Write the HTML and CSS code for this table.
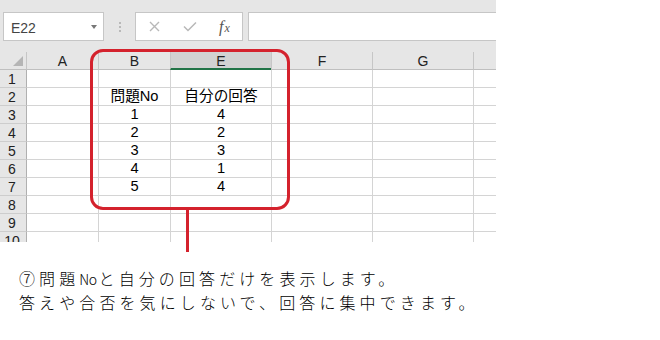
FILE: index.html
```html
<!DOCTYPE html>
<html lang="ja">
<head>
<meta charset="utf-8">
<title>Excel</title>
<link rel="stylesheet" href="styles.css">
</head>
<body>
<div class="stage">
  <div class="sheet">
    <div class="toolbar">
      <div class="namebox"><span class="ref">E22</span><span class="caret"></span></div>
      <div class="grip"><i></i><i></i><i></i></div>
      <div class="fbtns">
        <span class="fbtn"><svg width="11" height="11" viewBox="0 0 11 11"><path d="M1 1L10 10M10 1L1 10" stroke="#b8b8b8" stroke-width="1.4" fill="none"/></svg></span>
        <span class="fbtn"><svg width="14" height="11" viewBox="0 0 14 11"><path d="M1 5.5L5 9.5L13 1.5" stroke="#b8b8b8" stroke-width="1.5" fill="none"/></svg></span>
        <span class="fbtn fx"><span class="f">f</span><span class="x">x</span></span>
      </div>
      <div class="formula"></div>
    </div>
    <div class="grid">
      <div class="corner"><span class="tri"></span></div>
      <div class="ch">A</div>
      <div class="ch">B</div>
      <div class="ch sel">E</div>
      <div class="ch">F</div>
      <div class="ch">G</div>
      <div class="ch"></div>

      <div class="rh">1</div><div class="c ca"></div><div class="c"></div><div class="c"></div><div class="c"></div><div class="c"></div><div class="c"></div>
      <div class="rh">2</div><div class="c ca"></div><div class="c">問題No</div><div class="c">自分の回答</div><div class="c"></div><div class="c"></div><div class="c"></div>
      <div class="rh">3</div><div class="c ca"></div><div class="c">1</div><div class="c">4</div><div class="c"></div><div class="c"></div><div class="c"></div>
      <div class="rh">4</div><div class="c ca"></div><div class="c">2</div><div class="c">2</div><div class="c"></div><div class="c"></div><div class="c"></div>
      <div class="rh">5</div><div class="c ca"></div><div class="c">3</div><div class="c">3</div><div class="c"></div><div class="c"></div><div class="c"></div>
      <div class="rh">6</div><div class="c ca"></div><div class="c">4</div><div class="c">1</div><div class="c"></div><div class="c"></div><div class="c"></div>
      <div class="rh">7</div><div class="c ca"></div><div class="c">5</div><div class="c">4</div><div class="c"></div><div class="c"></div><div class="c"></div>
      <div class="rh">8</div><div class="c ca"></div><div class="c"></div><div class="c"></div><div class="c"></div><div class="c"></div><div class="c"></div>
      <div class="rh">9</div><div class="c ca"></div><div class="c"></div><div class="c"></div><div class="c"></div><div class="c"></div><div class="c"></div>
      <div class="rh">10</div><div class="c ca"></div><div class="c"></div><div class="c"></div><div class="c"></div><div class="c"></div><div class="c"></div>
    </div>
  </div>
  <div class="callout"></div>
  <div class="pointer"></div>
</div>
<p class="note">⑦問題<span class="no">No</span>と自分の回答だけを表示します。<br>答えや合否を気にしないで、回答に集中できます。</p>
</body>
</html>
```

FILE: styles.css
```css
html, body {
  margin: 0;
  padding: 0;
  background: #ffffff;
}
body {
  width: 660px;
  height: 340px;
  overflow: hidden;
}
.stage {
  position: relative;
  width: 496px;
  height: 242px;
}
.sheet {
  width: 496px;
  height: 242px;
  overflow: hidden;
  background: #ffffff;
}
.toolbar {
  box-sizing: border-box;
  height: 52px;
  background: #e6e6e6;
  display: flex;
  align-items: flex-start;
  padding: 12px 0 0 3px;
}
.namebox {
  box-sizing: border-box;
  width: 101px;
  height: 29px;
  background: #ffffff;
  border: 1px solid #c6c6c6;
  display: flex;
  align-items: center;
  justify-content: space-between;
  padding: 0 6px 0 7px;
}
.ref {
  font-family: "Liberation Sans", Arial, sans-serif;
  font-size: 14px;
  color: #444444;
  padding-top: 2px;
}
.caret {
  width: 0;
  height: 0;
  border-top: 4px solid #777777;
  border-left: 3.5px solid transparent;
  border-right: 3.5px solid transparent;
}
.grip {
  width: 31px;
  height: 29px;
  display: flex;
  flex-direction: column;
  align-items: center;
  justify-content: center;
  gap: 2px;
}
.grip i {
  display: block;
  width: 2px;
  height: 2px;
  background: #b9b9b9;
}
.fbtns {
  box-sizing: border-box;
  width: 108px;
  height: 29px;
  background: #ffffff;
  border: 1px solid #c6c6c6;
  display: flex;
  align-items: center;
  padding-left: 1px;
}
.fbtn {
  width: 36px;
  display: flex;
  justify-content: center;
  align-items: center;
}
.fx {
  font-family: "Liberation Serif", "Times New Roman", serif;
  font-style: italic;
  color: #555555;
  align-items: baseline;
}
.fx .f {
  font-size: 16px;
}
.fx .x {
  font-size: 12px;
  margin-left: 1px;
}
.formula {
  box-sizing: border-box;
  margin-left: 5px;
  flex: 1;
  height: 29px;
  background: #ffffff;
  border: 1px solid #c6c6c6;
  border-right: none;
}
.grid {
  display: grid;
  grid-template-columns: 26px 72px 72px 101px 101px 101px 23px;
  grid-auto-rows: 18px;
  font-family: "Liberation Sans", Arial, "Noto Sans CJK JP", sans-serif;
}
.corner {
  box-sizing: border-box;
  background: #e6e6e6;
  border-bottom: 1px solid #bfbfbf;
  position: relative;
}
.tri {
  position: absolute;
  right: 3px;
  bottom: 3px;
  width: 0;
  height: 0;
  border-bottom: 10px solid #b5b5b5;
  border-left: 10px solid transparent;
}
.ch {
  box-sizing: border-box;
  background: #e6e6e6;
  border-left: 1px solid #c6c6c6;
  border-bottom: 1px solid #bfbfbf;
  text-align: center;
  font-size: 14px;
  line-height: 19px;
  color: #222222;
}
.ch.sel {
  background: #d2d2d2;
  border-bottom: 2px solid #217346;
}
.rh {
  box-sizing: border-box;
  background: #e6e6e6;
  border-bottom: 1px solid #cdcdcd;
  text-align: center;
  font-size: 14px;
  line-height: 19px;
  color: #222222;
  padding-right: 2px;
}
.c {
  box-sizing: border-box;
  border-left: 1px solid #d4d4d4;
  border-bottom: 1px solid #d4d4d4;
  text-align: center;
  font-size: 14.67px;
  line-height: 17px;
  color: #000000;
  white-space: nowrap;
}
.c.ca {
  border-left-color: #b0b0b0;
}
.callout {
  position: absolute;
  box-sizing: border-box;
  left: 90px;
  top: 49px;
  width: 200px;
  height: 161px;
  border: 3px solid #d4222d;
  border-radius: 13px;
}
.pointer {
  position: absolute;
  left: 186px;
  top: 208px;
  width: 3px;
  height: 44px;
  background: #d4222d;
}
.note {
  margin: 0;
  padding: 25px 0 0 19px;
  font-family: "Noto Sans CJK JP", sans-serif;
  font-size: 16px;
  font-weight: 300;
  line-height: 23px;
  letter-spacing: 4.1px;
  color: #000000;
  white-space: nowrap;
}
.note .no {
  font-size: 14px;
  letter-spacing: -0.5px;
  margin-right: 2px;
}
```
